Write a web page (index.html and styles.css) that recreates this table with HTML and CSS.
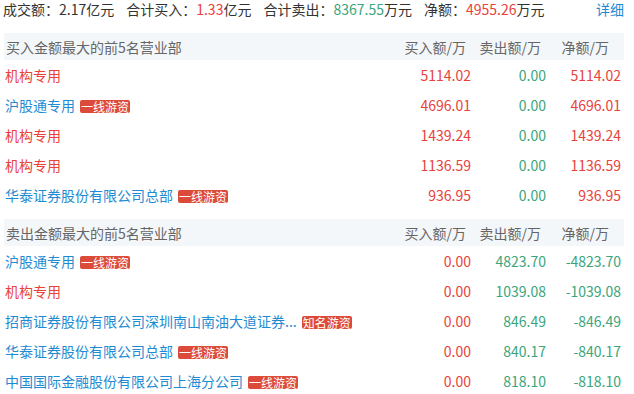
FILE: index.html
```html
<!DOCTYPE html>
<html lang="zh-CN">
<head>
<meta charset="utf-8">
<link rel="stylesheet" href="styles.css">
</head>
<body>
<div class="page">
  <div class="summary">
    <span class="item">成交额：2.17亿元</span>
    <span class="item">合计买入：<span class="red">1.33</span>亿元</span>
    <span class="item">合计卖出：<span class="green">8367.55</span>万元</span>
    <span class="item">净额：<span class="red">4955.26</span>万元</span>
    <a class="more">详细</a>
  </div>

  <div class="section">
    <div class="row head">
      <div class="name">买入金额最大的前5名营业部</div>
      <div class="num hb">买入额/万</div>
      <div class="num hs">卖出额/万</div>
      <div class="num hn">净额/万</div>
    </div>
    <div class="row">
      <div class="name red">机构专用</div>
      <div class="num red">5114.02</div>
      <div class="num green">0.00</div>
      <div class="num red">5114.02</div>
    </div>
    <div class="row">
      <div class="name blue">沪股通专用<span class="tag">一线游资</span></div>
      <div class="num red">4696.01</div>
      <div class="num green">0.00</div>
      <div class="num red">4696.01</div>
    </div>
    <div class="row">
      <div class="name red">机构专用</div>
      <div class="num red">1439.24</div>
      <div class="num green">0.00</div>
      <div class="num red">1439.24</div>
    </div>
    <div class="row">
      <div class="name red">机构专用</div>
      <div class="num red">1136.59</div>
      <div class="num green">0.00</div>
      <div class="num red">1136.59</div>
    </div>
    <div class="row">
      <div class="name blue">华泰证券股份有限公司总部<span class="tag">一线游资</span></div>
      <div class="num red">936.95</div>
      <div class="num green">0.00</div>
      <div class="num red">936.95</div>
    </div>
  </div>

  <div class="section second">
    <div class="row head">
      <div class="name">卖出金额最大的前5名营业部</div>
      <div class="num hb">买入额/万</div>
      <div class="num hs">卖出额/万</div>
      <div class="num hn">净额/万</div>
    </div>
    <div class="row">
      <div class="name blue">沪股通专用<span class="tag">一线游资</span></div>
      <div class="num red">0.00</div>
      <div class="num green">4823.70</div>
      <div class="num green">-4823.70</div>
    </div>
    <div class="row">
      <div class="name red">机构专用</div>
      <div class="num red">0.00</div>
      <div class="num green">1039.08</div>
      <div class="num green">-1039.08</div>
    </div>
    <div class="row">
      <div class="name blue">招商证券股份有限公司深圳南山南油大道证券...<span class="tag">知名游资</span></div>
      <div class="num red">0.00</div>
      <div class="num green">846.49</div>
      <div class="num green">-846.49</div>
    </div>
    <div class="row">
      <div class="name blue">华泰证券股份有限公司总部<span class="tag">一线游资</span></div>
      <div class="num red">0.00</div>
      <div class="num green">840.17</div>
      <div class="num green">-840.17</div>
    </div>
    <div class="row">
      <div class="name blue">中国国际金融股份有限公司上海分公司<span class="tag">一线游资</span></div>
      <div class="num red">0.00</div>
      <div class="num green">818.10</div>
      <div class="num green">-818.10</div>
    </div>
  </div>
</div>
</body>
</html>
```

FILE: styles.css
```css
html, body {
  margin: 0;
  padding: 0;
  background: #ffffff;
}

body {
  font-family: "Microsoft YaHei", "Noto Sans CJK SC", "Noto Sans", sans-serif;
  font-size: 14px;
  color: #333333;
}

.page {
  width: 620px;
  padding: 0 10px 0 4px;
}

.summary {
  display: flex;
  align-items: center;
  height: 19px;
  line-height: 19px;
  margin-left: -1px;
  white-space: nowrap;
}

.summary .item {
  margin-right: 12px;
}

.summary .more {
  margin-left: auto;
  color: #1e8ad6;
  cursor: pointer;
}

.section {
  margin-top: 14px;
}

.section.second {
  margin-top: 9px;
}

.row {
  display: grid;
  grid-template-columns: 1fr 75px 75px 75px;
  padding-right: 3px;
  height: 30px;
  align-items: center;
  white-space: nowrap;
}

.row.head {
  height: 27px;
  background: #f4f7fa;
  color: #666666;
}

.name {
  padding-left: 1px;
  display: flex;
  align-items: center;
}

.row.head .name {
  padding-left: 2px;
}

.num {
  text-align: right;
}

.hb, .hs {
  padding-right: 5px;
}

.hn {
  padding-right: 12px;
}

.red {
  color: #e8423b;
}

.green {
  color: #3aa57b;
}

.blue {
  color: #1f8bd2;
}

.tag {
  display: inline-block;
  margin-left: 5px;
  margin-top: 3px;
  padding: 0 1px;
  height: 13px;
  line-height: 13px;
  font-size: 12px;
  color: #ffffff;
  background: #dc4a3a;
  border-radius: 2px;
}
```
